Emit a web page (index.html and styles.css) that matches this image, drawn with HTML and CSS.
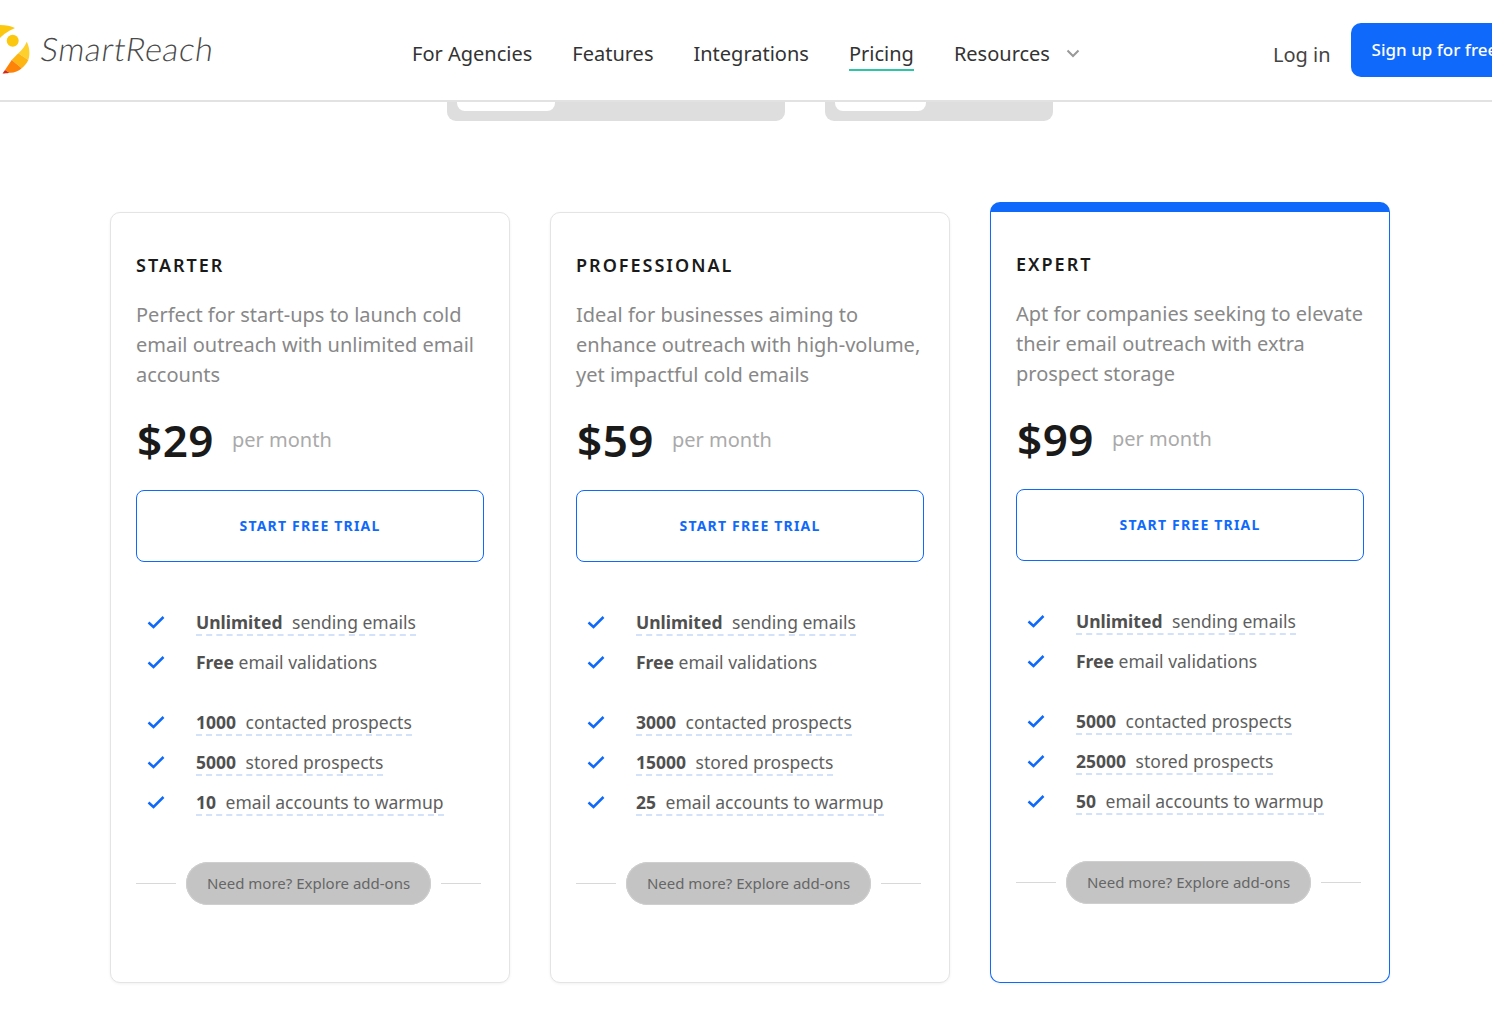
FILE: index.html
```html
<!DOCTYPE html>
<html lang="en">
<head>
  <meta charset="UTF-8">
  <title>SmartReach Pricing</title>
  <link rel="stylesheet" href="styles.css">
</head>
<body>

  <header class="topbar">
    <a class="logo" href="#">
      <svg class="logo-mark" width="32" height="52" viewBox="0 0 32 52">
        <path d="M0 2 C6 2 11 3 15 5 C8 8 4 11 0 15 Z" fill="#fcc70f"/>
        <circle cx="12.7" cy="17.7" r="6" fill="#fcc70f"/>
        <path d="M26.7 18.7 C29.5 24 30.3 31 28.3 37 L18.3 30.3 C22 27 25 23 26.7 18.7 Z" fill="#fdd02e"/>
        <path d="M28.3 37 C26.7 40.5 24.5 43 21.7 45.3 L11.7 37 L18.3 30.3 Z" fill="#fdb514"/>
        <path d="M21.7 45.3 C18 48.5 14 50 9.3 49.7 L5 47 L11.7 37 Z" fill="#fc8208"/>
        <path d="M9.3 49.7 C7 50.3 5 50.5 2.5 50.5 L5 47 Z" fill="#d3271a"/>
      </svg>
      <span class="logo-text">SmartReach</span>
    </a>
    <nav class="nav">
      <a href="#">For Agencies</a>
      <a href="#">Features</a>
      <a href="#">Integrations</a>
      <a href="#" class="active">Pricing</a>
      <a href="#" class="has-menu">Resources
        <svg width="14" height="9" viewBox="0 0 14 9"><path d="M1.5 1.5 L7 7 L12.5 1.5" fill="none" stroke="#999" stroke-width="2"/></svg>
      </a>
    </nav>
    <a href="#" class="login">Log in</a>
    <a href="#" class="signup">Sign up for free</a>
  </header>

  <div class="tabs">
    <div class="tab tab-wide"><span></span></div>
    <div class="tab tab-narrow"><span></span></div>
  </div>

  <main class="plans">

    <section class="plan">
      <h3>STARTER</h3>
      <p class="desc">Perfect for start-ups to launch cold email outreach with unlimited email accounts</p>
      <div class="price"><b>$29</b><span>per month</span></div>
      <a href="#" class="trial">START FREE TRIAL</a>
      <ul class="features">
        <li><svg width="18" height="14" viewBox="0 0 18 14"><path d="M1.5 7.5 L6.5 12 L16.5 2" fill="none" stroke="#0f69fa" stroke-width="2.5"/></svg><span class="dash"><b>Unlimited</b> sending emails</span></li>
        <li><svg width="18" height="14" viewBox="0 0 18 14"><path d="M1.5 7.5 L6.5 12 L16.5 2" fill="none" stroke="#0f69fa" stroke-width="2.5"/></svg><span class="no-dash"><b class="plain">Free</b> email validations</span></li>
      </ul>
      <ul class="features">
        <li><svg width="18" height="14" viewBox="0 0 18 14"><path d="M1.5 7.5 L6.5 12 L16.5 2" fill="none" stroke="#0f69fa" stroke-width="2.5"/></svg><span class="dash"><b>1000</b> contacted prospects</span></li>
        <li><svg width="18" height="14" viewBox="0 0 18 14"><path d="M1.5 7.5 L6.5 12 L16.5 2" fill="none" stroke="#0f69fa" stroke-width="2.5"/></svg><span class="dash"><b>5000</b> stored prospects</span></li>
        <li><svg width="18" height="14" viewBox="0 0 18 14"><path d="M1.5 7.5 L6.5 12 L16.5 2" fill="none" stroke="#0f69fa" stroke-width="2.5"/></svg><span class="dash"><b>10</b> email accounts to warmup</span></li>
      </ul>
      <div class="addons"><i></i><a href="#">Need more? Explore add-ons</a><i></i></div>
    </section>

    <section class="plan">
      <h3>PROFESSIONAL</h3>
      <p class="desc">Ideal for businesses aiming to enhance outreach with high-volume, yet impactful cold emails</p>
      <div class="price"><b>$59</b><span>per month</span></div>
      <a href="#" class="trial">START FREE TRIAL</a>
      <ul class="features">
        <li><svg width="18" height="14" viewBox="0 0 18 14"><path d="M1.5 7.5 L6.5 12 L16.5 2" fill="none" stroke="#0f69fa" stroke-width="2.5"/></svg><span class="dash"><b>Unlimited</b> sending emails</span></li>
        <li><svg width="18" height="14" viewBox="0 0 18 14"><path d="M1.5 7.5 L6.5 12 L16.5 2" fill="none" stroke="#0f69fa" stroke-width="2.5"/></svg><span class="no-dash"><b class="plain">Free</b> email validations</span></li>
      </ul>
      <ul class="features">
        <li><svg width="18" height="14" viewBox="0 0 18 14"><path d="M1.5 7.5 L6.5 12 L16.5 2" fill="none" stroke="#0f69fa" stroke-width="2.5"/></svg><span class="dash"><b>3000</b> contacted prospects</span></li>
        <li><svg width="18" height="14" viewBox="0 0 18 14"><path d="M1.5 7.5 L6.5 12 L16.5 2" fill="none" stroke="#0f69fa" stroke-width="2.5"/></svg><span class="dash"><b>15000</b> stored prospects</span></li>
        <li><svg width="18" height="14" viewBox="0 0 18 14"><path d="M1.5 7.5 L6.5 12 L16.5 2" fill="none" stroke="#0f69fa" stroke-width="2.5"/></svg><span class="dash"><b>25</b> email accounts to warmup</span></li>
      </ul>
      <div class="addons"><i></i><a href="#">Need more? Explore add-ons</a><i></i></div>
    </section>

    <section class="plan featured">
      <h3>EXPERT</h3>
      <p class="desc">Apt for companies seeking to elevate their email outreach with extra prospect storage</p>
      <div class="price"><b>$99</b><span>per month</span></div>
      <a href="#" class="trial">START FREE TRIAL</a>
      <ul class="features">
        <li><svg width="18" height="14" viewBox="0 0 18 14"><path d="M1.5 7.5 L6.5 12 L16.5 2" fill="none" stroke="#0f69fa" stroke-width="2.5"/></svg><span class="dash"><b>Unlimited</b> sending emails</span></li>
        <li><svg width="18" height="14" viewBox="0 0 18 14"><path d="M1.5 7.5 L6.5 12 L16.5 2" fill="none" stroke="#0f69fa" stroke-width="2.5"/></svg><span class="no-dash"><b class="plain">Free</b> email validations</span></li>
      </ul>
      <ul class="features">
        <li><svg width="18" height="14" viewBox="0 0 18 14"><path d="M1.5 7.5 L6.5 12 L16.5 2" fill="none" stroke="#0f69fa" stroke-width="2.5"/></svg><span class="dash"><b>5000</b> contacted prospects</span></li>
        <li><svg width="18" height="14" viewBox="0 0 18 14"><path d="M1.5 7.5 L6.5 12 L16.5 2" fill="none" stroke="#0f69fa" stroke-width="2.5"/></svg><span class="dash"><b>25000</b> stored prospects</span></li>
        <li><svg width="18" height="14" viewBox="0 0 18 14"><path d="M1.5 7.5 L6.5 12 L16.5 2" fill="none" stroke="#0f69fa" stroke-width="2.5"/></svg><span class="dash"><b>50</b> email accounts to warmup</span></li>
      </ul>
      <div class="addons"><i></i><a href="#">Need more? Explore add-ons</a><i></i></div>
    </section>

  </main>

</body>
</html>
```

FILE: styles.css
```css
body {
  font-family: "Noto Sans", Arial, sans-serif;
  background: #fff;
  margin: 0;
  padding: 0;
  height: 1035px;
  overflow: hidden;
}

a {
  text-decoration: none;
  color: inherit;
}

.topbar {
  display: flex;
  align-items: center;
  height: 100px;
  border-bottom: 2px solid #e2e2e2;
  white-space: nowrap;
}

.logo {
  display: flex;
  align-items: center;
  width: 412px;
  flex-shrink: 0;
}

.logo-mark {
  margin-top: -2px;
}

.logo-text {
  font-family: Lato, sans-serif;
  font-weight: 300;
  font-size: 32.5px;
  letter-spacing: 0.7px;
  color: #4a4a4a;
  margin-left: 9px;
  margin-top: -3px;
  transform: skewX(-8deg);
}

.nav {
  display: flex;
  gap: 40px;
  font-size: 20px;
  color: #333;
  margin-top: 12px;
}

.nav a {
  display: flex;
  align-items: center;
  padding-bottom: 2px;
  border-bottom: 2px solid transparent;
  line-height: 26px;
}

.nav a.active {
  border-bottom-color: #2ec4a6;
}

.has-menu svg {
  margin-left: 16px;
  margin-top: -2px;
}

.login {
  font-size: 20px;
  color: #444;
  margin-left: 193px;
  margin-top: 8px;
}

.signup {
  flex-shrink: 0;
  margin-left: 20px;
  padding: 0 20px 0 21px;
  height: 54px;
  line-height: 54px;
  background: #0f69fa;
  border-radius: 10px;
  color: #fff;
  font-size: 17px;
  font-weight: 500;
}

.tabs {
  display: flex;
  gap: 40px;
  margin-left: 447px;
}

.tab {
  height: 19px;
  background: #dedede;
  border-radius: 0 0 9px 9px;
  padding-left: 10px;
}

.tab span {
  display: block;
  height: 9px;
  background: #fff;
  border-radius: 0 0 8px 8px;
}

.tab-wide {
  width: 328px;
}

.tab-wide span {
  width: 98px;
}

.tab-narrow {
  width: 218px;
}

.tab-narrow span {
  width: 91px;
}

.plans {
  display: flex;
  align-items: flex-end;
  gap: 40px;
  height: 862px;
  margin-left: 110px;
}

.plan {
  box-sizing: border-box;
  width: 400px;
  height: 771px;
  padding: 0 25px;
  background: #fff;
  border: 1px solid #e4e4e4;
  border-radius: 10px;
  box-shadow: 0 1px 3px rgba(0,0,0,0.06);
}

.plan.featured {
  height: 781px;
  border: 1px solid #0f69fa;
  border-top: 10px solid #0f69fa;
}

h3 {
  margin: 40px 0 0;
  font-size: 18px;
  line-height: 24px;
  font-weight: 600;
  letter-spacing: 2px;
  color: #1a1a1a;
}

.desc {
  margin: 23px 0 0;
  font-size: 20px;
  line-height: 30px;
  color: #888;
}

.price {
  display: flex;
  align-items: center;
  height: 60px;
  margin-top: 20px;
}

.price b {
  font-size: 44px;
  font-weight: 600;
  letter-spacing: 0.5px;
  color: #1a1a1a;
  margin-left: 1px;
}

.price span {
  font-size: 20px;
  color: #aaa;
  margin-left: 18px;
  margin-top: -2px;
}

.trial {
  display: block;
  margin-top: 20px;
  height: 72px;
  line-height: 70px;
  box-sizing: border-box;
  border: 1px solid #0f69fa;
  border-radius: 8px;
  text-align: center;
  font-size: 14px;
  font-weight: 700;
  letter-spacing: 1.2px;
  color: #0f69fa;
}

.features {
  list-style: none;
  margin: 41px 0 0;
  padding: 0;
}

.features + .features {
  margin-top: 20px;
}

.features li {
  display: flex;
  align-items: center;
  height: 40px;
  font-size: 17.5px;
  color: #5f5f5f;
}

.features svg {
  margin-left: 11px;
  margin-right: 31px;
  margin-top: -2px;
  flex-shrink: 0;
}

.features b {
  font-weight: 700;
  color: #505050;
  margin-right: 5px;
}

.features b.plain {
  margin-right: 0;
}

.dash,
.no-dash {
  border-bottom: 2px dashed #d3e1fb;
  line-height: 23px;
}

.no-dash {
  border-bottom-color: transparent;
}

.addons {
  display: flex;
  align-items: center;
  gap: 10px;
  margin-top: 39px;
}

.addons i {
  display: block;
  width: 40px;
  height: 1px;
  background: #d8d8d8;
}

.addons a {
  width: 245px;
  height: 43px;
  line-height: 43px;
  background: #c4c4c4;
  border-radius: 22px;
  text-align: center;
  font-size: 15px;
  color: #666;
  box-shadow: inset 0 0 0 1px #cfcfcf;
}
```
